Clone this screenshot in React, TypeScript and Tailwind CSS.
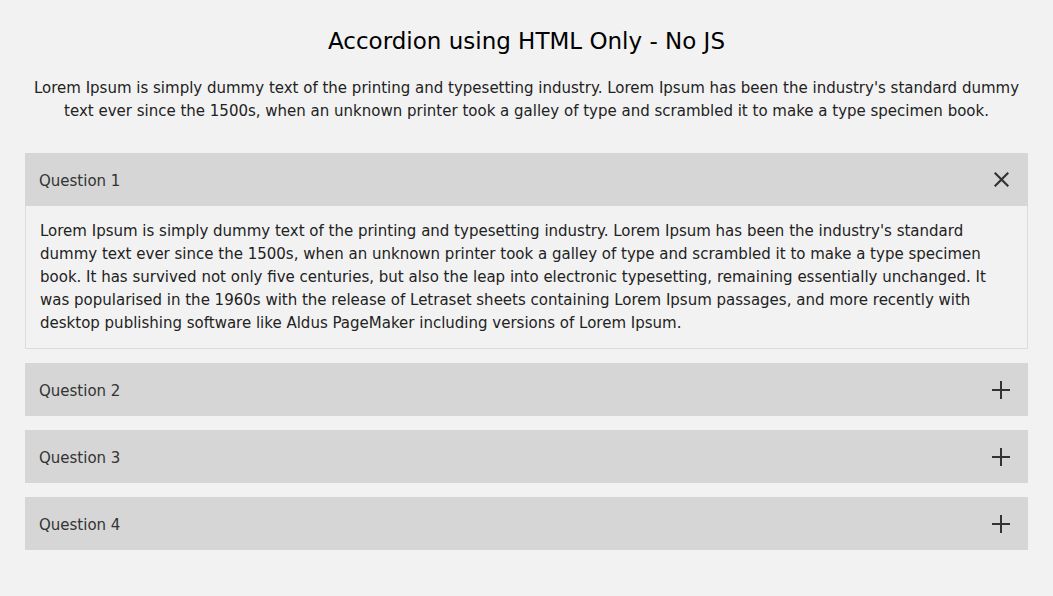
const lorem =
    "Lorem Ipsum is simply dummy text of the printing and typesetting industry. Lorem Ipsum has been the industry's standard dummy text ever since the 1500s, when an unknown printer took a galley of type and scrambled it to make a type specimen book.";

const answer =
    "Lorem Ipsum is simply dummy text of the printing and typesetting industry. Lorem Ipsum has been the industry's standard dummy text ever since the 1500s, when an unknown printer took a galley of type and scrambled it to make a type specimen book. It has survived not only five centuries, but also the leap into electronic typesetting, remaining essentially unchanged. It was popularised in the 1960s with the release of Letraset sheets containing Lorem Ipsum passages, and more recently with desktop publishing software like Aldus PageMaker including versions of Lorem Ipsum.";

const questions = ['Question 1', 'Question 2', 'Question 3', 'Question 4'];

const CloseIcon = () => (
    <svg className="mr-[5px] h-[15px] w-[15px]" viewBox="0 0 15 15" fill="none" stroke="#333" strokeWidth={2.2} strokeLinecap="square">
        <path d="M1.5 1.5l12 12M13.5 1.5l-12 12" />
    </svg>
);

const PlusIcon = () => (
    <svg className="mr-[4px] h-[18px] w-[18px]" viewBox="0 0 18 18" fill="none" stroke="#333" strokeWidth={2}>
        <path d="M9 0v18M0 9h18" />
    </svg>
);

const App = () => {
    return (
        <div className="min-h-[596px] bg-[#f2f2f2] px-[25px] pt-[26px] pb-10 font-['DejaVu_Sans',sans-serif] text-[#111]">
            {/* Header */}
            <h1 className="text-center text-[23px] leading-[30px] font-medium text-black">
                Accordion using HTML Only - No JS
            </h1>
            <p className="mt-[21px] text-center text-[15px] leading-[23px] text-[#222]">{lorem}</p>

            {/* Accordion */}
            <div className="mt-[30px] flex flex-col gap-[14px]">
                {questions.map((q, i) => (
                    <div key={q}>
                        <div className="flex h-[53px] items-center justify-between bg-[#d6d6d6] px-[14px] text-[15px] text-[#333]">
                            <span className="pt-[3px]">{q}</span>
                            {i === 0 ? <CloseIcon /> : <PlusIcon />}
                        </div>
                        {i === 0 && (
                            <div className="border border-t-0 border-[#dcdcdc] px-[14px] pt-[14px] pb-[13px] text-[15px] leading-[23px] text-[#222]">
                                {answer}
                            </div>
                        )}
                    </div>
                ))}
            </div>
        </div>
    );
};

export default App;
